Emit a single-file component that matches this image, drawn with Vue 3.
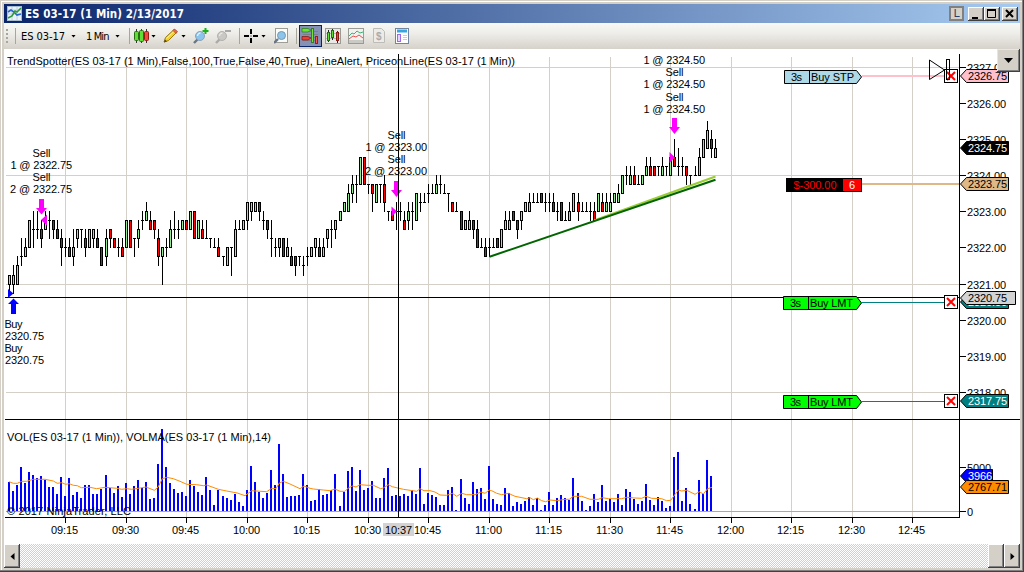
<script setup>
// Horizontal position of a one-minute bar; the 4.03px step adds a pixel now and then.
const STEPS = [24, 53, 82, 112, 141, 170, 200]
const barX = (i) => 9 + 4 * i + STEPS.filter((s) => i >= s).length
// Vertical position in quarter points above 2321.00
const tickY = (q) => Math.floor(284.05 - 9.04 * q)

// colour, body low, body high, low, high
const raw = `g0 1 -1 1,g0 1 -1 2,g0 2 0 3,d3 3 2 5,g3 4 3 5,g4 7 4 7,d6 6 4 8,d6 6 5 8,r5 6 4 7,g6 7 6 8,
d7 7 5 8,r6 7 5 7,r5 6 5 7,r4 5 2 6,d4 4 3 5,r3 4 3 5,g3 4 2 6,g5 6 4 6,d6 6 4 6,r4 5 3 6,
g4 6 4 6,g5 6 4 6,r4 5 4 6,r2 4 2 4,g3 5 2 6,r5 6 4 6,r4 5 4 5,d4 4 3 5,r3 4 3 5,g4 7 4 7,
r4 7 4 7,d5 5 3 5,g5 6 4 7,d7 7 6 8,g7 8 7 9,r6 7 6 8,r6 7 5 7,r3 5 2 6,g3 4 0 4,d4 4 3 5,
g4 6 4 7,d6 6 5 8,d6 6 5 7,g6 7 6 7,r6 7 6 7,g6 8 6 8,r5 8 5 8,g5 7 5 7,r5 6 5 7,d5 5 5 7,
d5 5 4 5,d4 4 4 5,r3 4 3 5,d3 3 2 3,g2 4 2 4,d4 4 1 4,g3 6 3 7,d6 6 6 7,g6 7 6 7,g7 9 6 9,
g8 9 7 9,g8 9 8 9,r8 9 7 9,d7 7 6 8,r6 7 5 7,d5 5 3 7,d4 4 3 5,g4 5 3 5,r3 5 3 5,g3 4 3 5,
r2 3 2 4,r2 3 1 3,d3 3 2 3,d2 2 1 3,d3 3 2 4,g3 4 3 4,g4 5 3 5,r3 4 3 5,g3 4 3 5,g5 6 4 6,
d6 6 4 7,g6 7 5 7,g7 8 7 8,g8 9 8 9,g8 10 8 11,g10 11 9 12,d11 11 9 12,g11 14 11 14,r11 14 11 14,d11 11 10 11,
r10 11 8 11,g9 11 9 11,d11 11 9 11,r9 11 8 12,d8 8 7 8,r7 8 7 8,d8 8 6 9,d8 8 7 9,r6 7 6 8,g7 8 6 9,
d8 8 6 9,g7 10 7 10,d9 9 8 10,d9 9 9 10,d10 10 9 11,d10 10 10 11,g10 11 10 12,d11 11 10 12,d10 10 10 11,d10 10 8 10,
r8 9 8 9,d8 8 8 9,r6 8 6 8,g6 7 6 7,g6 7 6 8,r6 7 5 7,r4 6 4 7,d4 4 4 5,r3 4 3 5,d4 4 3 5,
d4 4 4 5,r4 5 4 5,g4 6 4 6,g6 7 6 8,g6 7 6 8,r7 8 7 8,r6 7 5 7,g7 8 6 8,g8 9 8 9,g8 9 8 10,
d9 9 9 10,d9 9 9 10,r9 10 9 10,d9 9 8 10,d9 9 8 10,r8 9 8 10,d8 8 7 9,r7 9 7 9,d7 7 7 8,g7 8 7 9,
g8 10 8 10,r8 9 7 10,d8 8 8 9,d8 8 8 9,d8 8 7 9,r7 8 7 9,g8 10 8 10,r8 9 8 10,g8 9 8 10,g8 9 8 10,
g9 10 9 10,g9 10 9 11,g10 12 10 12,d12 12 11 13,g11 12 11 13,r11 12 11 13,d11 11 11 12,g11 12 11 12,g12 13 12 14,r12 13 12 14,
r12 13 12 13,d13 13 12 13,g12 13 12 14,d13 13 12 13,g12 14 12 14,r13 14 13 16,d13 13 12 15,d13 13 12 14,r12 13 11 13,d12 12 11 12,
d12 12 12 13,g12 14 12 15,g14 16 14 16,g15 17 15 18,r15 16 14 17,g14 15 14 16`
const candles = raw.split(',').map((s, i) => {
  const t = s.trim()
  const [lo, hi, low, high] = t.slice(1).split(' ').map(Number)
  return { x: barX(i), kind: t[0], top: tickY(hi), bottom: tickY(lo), high: tickY(high), low: tickY(low) }
})

// Volume bar heights in thirds of a pixel below the 273 baseline
const volumes = [
  186, 213, 195, 141, 189, 156, 165, 174, 168, 180, 201, 201, 222, 171, 228, 174, 225, 216, 234, 195,
  195, 222, 222, 206, 165, 204, 219, 198, 231, 189, 222, 198, 180, 204, 186, 237, 234, 132, 27, 141,
  189, 207, 219, 216, 228, 180, 198, 216, 225, 171, 210, 255, 210, 228, 234, 240, 222, 246, 258, 210,
  138, 186, 216, 234, 219, 150, 195, 72, 162, 231, 228, 228, 225, 162, 195, 243, 240, 207, 225, 222,
  210, 162, 258, 216, 153, 141, 213, 150, 210, 204, 183, 234, 234, 174, 144, 228, 225, 228, 222, 228,
  210, 222, 144, 252, 219, 225, 231, 255, 255, 210, 201, 270, 177, 234, 252, 186, 207, 204, 237, 138,
  237, 252, 255, 204, 219, 258, 246, 252, 243, 231, 255, 234, 270, 255, 216, 255, 234, 225, 234, 240,
  174, 219, 243, 270, 258, 222, 246, 195, 243, 237, 246, 222, 255, 207, 216, 237, 252, 243, 192, 240,
  255, 231, 243, 264, 258, 111, 96, 243, 204, 252, 267, 180, 222, 120, 168
].map((v, i) => ({ x: barX(i) - 1, h: Math.round((273 - v) / 3) }))

const average = [
  [0, '27,185 40,190 52,190 65,184 80,184 100,178 135,178 160,183 172,190 185,188 197,193 208,191 220,196 232,197 244,203 270,202 290,206 315,202 350,205 365,208 380,206 395,208 415,205 438,201 463,211 474,202 487,176 500,172 520,176 540,184 560,193 590,194 610,197 620,195 655,208 680,213 712,219 735,227 755,212 800,215 815,205 828,206 838,189 850,184 870,192 900,206 912,198 930,205 940,207 970,210 990,212 1005,207 1020,214 1035,214 1045,204 1057,198 1068,201 1080,194'],
  [360, '24,196 40,196 62,206 70,204 85,194 97,200 130,208 170,214 180,206 192,212 210,212 225,216 240,225 260,226 277,220 290,229 305,220 320,224 345,224 363,216 375,220 388,210 395,212 410,220 425,224 445,220 465,229 500,236 510,233 520,239 532,234 545,242 557,245 570,240 590,242 615,238 628,238 640,229 665,229 690,238 715,238 727,233 745,236 785,236 800,232 825,234 845,235 858,229 875,235 905,236 920,242 932,241 955,210 965,213 980,211 1005,223 1018,215 1030,222 1043,206 1056,202']
].flatMap(([ox, pts]) => pts.split(' ').map((p) => {
  const [x, y] = p.split(',').map(Number)
  return `${(ox + x / 3).toFixed(1)},${(420 + y / 3).toFixed(1)}`
})).join(' ')

const times = ['09:15', '09:30', '09:45', '10:00', '10:15', '10:30', '10:45', '11:00', '11:15', '11:30', '11:45', '12:00', '12:15', '12:30', '12:45']
  .map((t, k) => ({ t, x: barX(14 + 15 * k) }))
const prices = [2327, 2326, 2325, 2324, 2323, 2322, 2321, 2320, 2319, 2318].map((p) => ({ t: p.toFixed(2), y: tickY((p - 2321) * 4) }))

const notes = [
  ['Sell', 32.5, 157, 18], ['1 @ 2322.75', 10.5, 169, 61.5], ['Sell', 32.5, 181, 18], ['2 @ 2322.75', 10, 193, 62],
  ['Sell', 387.5, 139, 18], ['1 @ 2323.00', 365.5, 151, 61.5], ['Sell', 387.5, 163, 18], ['2 @ 2323.00', 365, 175, 62],
  ['1 @ 2324.50', 643.5, 64, 61.5], ['Sell', 665.5, 76, 18], ['1 @ 2324.50', 643.5, 88, 61.5], ['Sell', 665.5, 101, 18], ['1 @ 2324.50', 643.5, 113, 61.5],
  ['Buy', 4.5, 328, 18], ['2320.75', 5, 340, 39], ['Buy', 4.5, 352, 18], ['2320.75', 5, 364, 39]
]
const tags = [
  { t: '2326.75', y: 69, r: 1008, fill: '#ffc0cb', ink: '#000' },
  { t: '2324.75', y: 141, r: 1008, fill: '#000', ink: '#fff' },
  { t: '2323.75', y: 177, r: 1008, fill: '#deb887', ink: '#000' },
  { t: '2320.50', y: 295, r: 1008, fill: '#008080', ink: '#fff' },
  { t: '2320.75', y: 291, r: 1015, fill: '#d3d3d3', ink: '#000' },
  { t: '2317.75', y: 394, r: 1008, fill: '#008080', ink: '#fff' },
  { t: '3966', y: 469, r: 992, fill: '#00f', ink: '#fff' },
  { t: '2767.71', y: 480, r: 1008, fill: '#ff8c00', ink: '#000' }
]
const orders = [
  { t: 'Buy STP', x: 784, y: 70, fill: '#add8e6', box: 69 },
  { t: 'Buy LMT', x: 783, y: 296, fill: '#0f0', box: 295 },
  { t: 'Buy LMT', x: 783, y: 395, fill: '#0f0', box: 394 }
]
</script>

<template>
  <div class="window">
    <header class="titlebar">
      <svg class="app-icon" width="15" height="15" viewBox="0 0 15 15">
        <rect x=".5" y=".5" width="14" height="14" fill="#e8f0f8" stroke="#a8bccf" />
        <path d="M1 4h13M1 8h13M5 1v13M10 1v13" stroke="#c2d0de" fill="none" />
        <path d="M1 6l3-2 3 2 3 3 4-1" stroke="#2868c8" stroke-width="1.6" fill="none" />
        <path d="M1 12l4-2 3-5 2 1 4-4" stroke="#2a9a3a" stroke-width="1.6" fill="none" />
      </svg>
      <svg class="caption" width="165" height="18"><text x="0" y="13" textLength="159" xml:space="preserve">ES 03-17 (1 Min)  2/13/2017</text></svg>
      <div class="link">L</div>
      <div class="winbtn min"><svg width="15" height="13"><rect x="3" y="9" width="6" height="2" /></svg></div>
      <div class="winbtn max"><svg width="15" height="13"><path d="M2.5 2.5h8v7h-8zM2 2.5h9" fill="none" stroke="#000" /><path d="M2 1h9v2H2z" /></svg></div>
      <div class="winbtn close"><svg width="15" height="13"><path d="M3 2l7 7M10 2l-7 7" stroke="#000" stroke-width="2" /></svg></div>
    </header>

    <nav class="toolbar">
      <svg width="3" height="16"><path d="M1 1v15" stroke="#a8a59d" stroke-width="2" stroke-dasharray="2 2" /></svg>
      <i class="sep ml6"></i>
      <svg class="ml5 lbl" width="46" height="16"><text x="0" y="12" textLength="44">ES 03-17</text></svg>
      <i class="caret ml4"></i>
      <svg class="ml10 lbl" width="26" height="16"><text x="0" y="12" textLength="23.5">1 Min</text></svg>
      <i class="caret ml3"></i>
      <i class="sep ml9"></i>
      <svg class="ml4" width="16" height="16">
        <path d="M2.5 1v14M7.5 1v14M12.5 1v14" stroke="#333" />
        <rect x=".5" y="3.5" width="4" height="9" rx="1" fill="#5fdf35" stroke="#2a6e14" />
        <rect x="5.500" y="2.500" width="4" height="11" rx="1" fill="#5fdf35" stroke="#2a6e14" />
        <rect x="10.500" y="3.500" width="4" height="9" rx="1" fill="#f04a3c" stroke="#8f1d16" />
      </svg>
      <i class="caret ml1"></i>
      <svg class="ml7" width="16" height="16">
        <path d="M1 14l1.500-4.500L11 1.500l3 2.500-8.500 8.500z" fill="#f8d020" stroke="#9a7a10" />
        <path d="M3.500 10.500L11.500 3" stroke="#fff19a" />
        <path d="M10 2.500l1.500-1.500 3 2.500-1.500 2z" fill="#e86a50" stroke="#a04030" stroke-width=".7" />
        <path d="M1 14.500l1-3 2 2z" fill="#444" />
      </svg>
      <i class="caret ml2"></i>
      <svg class="ml7" width="16" height="16">
        <path d="M1 15l4-4" stroke="#667686" stroke-width="2.400" />
        <circle cx="7" cy="8" r="4.500" fill="#8cc5ec" stroke="#8aa2b8" /><path d="M4.500 8a3 3 0 0 1 3-3" stroke="#e1f3ff" stroke-width="1.400" fill="none" />
        <path d="M12.500 0v6M9.500 3h6" stroke="#18b01c" stroke-width="2" />
      </svg>
      <svg class="ml6" width="16" height="16">
        <path d="M1 15l4-4" stroke="#aaa" stroke-width="2.400" />
        <circle cx="7" cy="8" r="4.500" fill="#c9c8c4" stroke="#b2b1ad" /><path d="M4.500 8a3 3 0 0 1 3-3" stroke="#e8e7e4" stroke-width="1.400" fill="none" />
        <path d="M10 3h6" stroke="#aaa" stroke-width="2" />
      </svg>
      <i class="sep ml8"></i>
      <svg class="ml4" width="14" height="16"><path d="M7 1v5M7 10v5M0 8h5M9 8h5" stroke="#000" stroke-width="2" /><path d="M6.500 7.500h1v1h-1z" /></svg>
      <i class="caret ml3"></i>
      <svg class="ml8" width="15" height="16">
        <rect x="1.500" y=".5" width="12" height="14" fill="#fbfbfa" stroke="#9d9d98" />
        <path d="M0 15l4-4" stroke="#667686" stroke-width="2.400" /><circle cx="7.500" cy="7.500" r="4" fill="#8cc5ec" stroke="#7895ae" />
      </svg>
      <i class="sep ml7"></i>
      <div class="pressed ml2">
        <svg width="19" height="18">
          <path d="M2 4.500h15M2 7.500h15M2 10.500h15M2 13.500h15" stroke="#7a7f8a" />
          <path d="M1 1.500h6l3 1.500-3 2H1z" fill="#67e52f" stroke="#2a7a14" stroke-width=".7" />
          <path d="M1 9.500h6l3 1.500-3 2H1z" fill="#ef3e32" stroke="#7d1610" stroke-width=".7" />
          <path d="M11.500 1v15" stroke="#357b1f" stroke-width="3" /><path d="M11.500 2v13" stroke="#70e43c" />
          <path d="M15.500 9v8" stroke="#991e18" stroke-width="3" /><path d="M15.500 10v6" stroke="#f25a4d" />
        </svg>
      </div>
      <svg class="ml3" width="16" height="16">
        <rect x=".5" y=".5" width="15" height="15" fill="#e8e8e6" stroke="#9a9a96" /><path d="M1 5.500h14M1 10.500h14" stroke="#b9b9b5" />
        <path d="M3.500 2v12M7.500 1v11M12.500 3v12" stroke="#222" />
        <rect x="2.500" y="4.500" width="2" height="8" fill="#5fdf35" stroke="#286d15" />
        <rect x="6.500" y="2.500" width="2" height="7" fill="#5fdf35" stroke="#286d15" />
        <rect x="11.500" y="4.500" width="2" height="8" fill="#ef3e32" stroke="#861b14" />
      </svg>
      <svg class="ml7" width="16" height="16">
        <rect x=".5" y=".5" width="15" height="15" fill="#f1f1ef" stroke="#9a9a96" /><path d="M1 12h14v3H1z" fill="#c9c9c5" />
        <path d="M1 8l3-3 2 1 3-3 3 2 3-1" stroke="#35b676" fill="none" />
        <path d="M1 11l4-3 3 1 3-2 4 3" stroke="#e1554d" fill="none" />
      </svg>
      <svg class="ml9" width="12" height="16">
        <path d="M.5.5h8l3 3v11H.5z" fill="#ecebe8" stroke="#bdbcb8" /><text x="3" y="12" class="dollar">$</text>
      </svg>
      <svg class="ml10" width="14" height="16">
        <rect x=".5" y=".5" width="13" height="15" fill="#fff" stroke="#7184a0" /><path d="M2 3h10" stroke="#36a4e0" stroke-width="3" />
        <rect x="2.500" y="6.500" width="3" height="7" fill="#e6d6ff" stroke="#9a6ae8" /><path d="M8 7.500h4M8 9.500h4M8 11.500h4" stroke="#c8ced8" />
      </svg>
    </nav>

    <main class="chart">
      <svg width="1016" height="495" viewBox="4 49 1016 495">
        <g shape-rendering="crispEdges">
          <g fill="#d4d0c8">
            <rect v-for="t in times" :key="t.t" :x="t.x" y="57" width="1" height="460" />
            <rect v-for="y in [67, 175, 284, 392]" :key="y" x="6" :y="y" width="953" height="1" />
          </g>
          <rect x="6" y="511" width="953" height="1" fill="#a9a9a9" />
          <rect v-for="(v, i) in volumes" :key="i" :x="v.x" :y="511 - v.h" width="2" :height="v.h" fill="#00f" />
          <g v-for="(c, i) in candles" :key="i">
            <rect :x="c.x" :y="c.high" width="1" :height="c.low - c.high + 1" />
            <rect v-if="c.kind === 'd'" :x="c.x - 1" :y="c.top" width="3" height="1" />
            <template v-else>
              <rect :x="c.x - 1" :y="c.top" width="3" :height="c.bottom - c.top + 1" />
              <rect :x="c.x" :y="c.top + 1" width="1" :height="c.bottom - c.top - 1" :fill="c.kind === 'g' ? '#90ee90' : '#f00'" />
            </template>
          </g>
        </g>
        <polyline :points="average" fill="none" stroke="#ff8c00" stroke-width="1" />
        <path d="M594 220.500L715.500 176.500" stroke="#9acd32" stroke-width="2" />
        <path d="M489.500 256.800L715.500 179.800" stroke="#006400" stroke-width="2" />

        <g fill="#f0f">
          <path d="M39 199h5v9h3l-5.500 6.500-5.500-6.500h3z" /><path d="M41 220l6-5.500v11z" />
          <path d="M394 181h5v9h3l-5.500 7-5.500-7h3z" /><path d="M397 211.500l-5.500-5v10z" />
          <path d="M672 118h5v9h3l-5.500 7-5.500-7h3z" /><path d="M675 157.500l-5.500-5.500v11z" />
        </g>
        <g fill="#00f"><path d="M13.500 298.500l5.500 5.500h-3v10h-5v-10h-3z" /><path d="M8 289v9l5.500-4.500z" /></g>

        <g class="t">
          <text v-for="(n, i) in notes" :key="i" :x="n[1]" :y="n[2]" :textLength="n[3]">{{ n[0] }}</text>
          <text x="7" y="65" textLength="508">TrendSpotter(ES 03-17 (1 Min),False,100,True,False,40,True), LineAlert, PriceonLine(ES 03-17 (1 Min))</text>
          <text x="7" y="441" textLength="264">VOL(ES 03-17 (1 Min)), VOLMA(ES 03-17 (1 Min),14)</text>
          <text x="7" y="515" textLength="124">© 2017 NinjaTrader, LLC</text>
        </g>

        <g shape-rendering="crispEdges">
          <rect x="862" y="75" width="83" height="2" fill="#ffc0cb" />
          <rect x="862" y="183" width="98" height="2" fill="#deb887" />
          <rect x="862" y="302" width="83" height="1" fill="#008080" />
          <rect x="862" y="401" width="83" height="1" fill="#008080" />
          <rect x="959" y="54" width="1" height="464" />
          <rect x="5" y="517" width="955" height="1" />
          <rect x="5" y="419" width="1015" height="1" />
          <rect x="5" y="297" width="955" height="1" />
          <rect x="398" y="54" width="1" height="464" />
          <rect v-for="p in prices" :key="p.t" x="960" :y="p.y" width="6" height="1" />
          <rect x="960" y="467" width="6" height="1" /><rect x="960" y="511" width="6" height="1" />
          <rect v-for="t in times" :key="t.t" :x="t.x" y="518" width="1" height="5" />
        </g>
        <g class="t">
          <text v-for="p in prices" :key="p.t" x="967" :y="p.y + 5" textLength="39">{{ p.t }}</text>
          <text x="967" y="472" textLength="24">5000</text><text x="967" y="516">0</text>
          <text v-for="t in times" :key="t.t" :x="t.x - 14" y="534" textLength="27">{{ t.t }}</text>
          <rect x="383" y="523" width="31" height="13" fill="#d3d3d3" />
          <text x="385" y="534" textLength="27">10:37</text>
        </g>

        <g v-for="o in orders" :key="o.y" class="t">
          <path :d="`M${o.x + .5} ${o.y + .5}H856.5L861.5 ${o.y + 7}L856.5 ${o.y + 13.5}H${o.x + .5}Z`" :fill="o.fill" stroke="#000" />
          <rect :x="o.x + 25" :y="o.y" width="1" height="14" />
          <text :x="o.x + 7" :y="o.y + 11" textLength="11">3s</text>
          <text :x="o.x + 27" :y="o.y + 11" textLength="43">{{ o.t }}</text>
          <rect x="944.500" :y="o.box + .5" width="13" height="13" fill="#fff" stroke="#000" />
          <path :d="`M947 ${o.box + 3}l8 8M955 ${o.box + 3}l-8 8`" stroke="#f00" stroke-width="2" />
        </g>
        <g class="t">
          <rect x="786" y="178" width="76" height="14" /><rect x="843" y="179" width="18" height="12" fill="#f00" />
          <text x="793.500" y="189" textLength="43" fill="#f00">$-300.00</text><text x="849" y="189" fill="#fff">6</text>
        </g>
        <path d="M929.500 60v19.500L944.500 70z" fill="none" stroke="#000" />
        <rect x="946.500" y="59.500" width="3" height="20" fill="none" stroke="#000" />

        <g v-for="g in tags" :key="g.t + g.y" class="t">
          <path :d="`M960.5 ${g.y + 7}L966.500 ${g.y + .5}H${g.r + .5}V${g.y + 13.5}H966.500Z`" :fill="g.fill" stroke="#000" />
          <text x="968" :y="g.y + 11" :textLength="g.t.length > 4 ? 39 : 24" :fill="g.ink">{{ g.t }}</text>
        </g>
      </svg>
      <button class="dropdown"><i class="caret big"></i></button>
    </main>

    <footer class="scroll">
      <div class="sbtn"><svg width="5" height="7"><path d="M4.500 0v7L.5 3.500z" /></svg></div>
      <div class="track"></div>
      <div class="sbtn thumb"></div>
      <div class="sbtn"><svg width="5" height="7"><path d="M.5 0v7l4-3.500z" /></svg></div>
    </footer>
  </div>
</template>

<style>
html, body { margin: 0; overflow: hidden; background: #d4d0c8; }
</style>
<style scoped>
.window {
  box-sizing: border-box; width: 1024px; height: 572px; padding: 4px 4px 4px 4px; background: #d4d0c8;
  box-shadow: inset -1px -1px #404040, inset -2px -2px #808080, inset 1px 1px #d4d0c8, inset 2px 2px #fff;
  display: flex; flex-direction: column; overflow: hidden;
}
.titlebar {
  height: 19px; flex: none; display: flex; align-items: center; padding: 0 2px 0 3px; box-sizing: border-box;
  background: linear-gradient(90deg, #0a246a, #a6caf0);
}
.caption { margin-left: 3px; margin-right: auto; }
.caption text { font: bold 11.500px "DejaVu Sans Condensed", "DejaVu Sans", sans-serif; fill: #fff; }
.link {
  width: 15px; height: 15px; box-sizing: border-box; border: 2px solid #808080; background: #d4d0c8; color: #27406e;
  font: 11px/11px "DejaVu Sans", sans-serif; text-align: center; margin-right: 4px;
}
.winbtn {
  width: 16px; height: 14px; box-sizing: border-box; background: #d4d0c8; padding: 1px;
  box-shadow: inset -1px -1px #404040, inset 1px 1px #fff, inset -2px -2px #808080;
}
.winbtn svg { display: block; }
.close { margin-left: 2px; }
.toolbar {
  height: 26px; flex: none; box-sizing: border-box; display: flex; align-items: center; padding-left: 2px;
  background: linear-gradient(#f8f8f6, #eeede9 40%, #d6d2ca); border-radius: 0 0 3px 3px;
}
.toolbar > * { flex: none; }
.lbl text { font: 11px "DejaVu Sans Condensed", "DejaVu Sans", sans-serif; fill: #000; }
.dollar { font: bold 10px "Liberation Sans", sans-serif; fill: #aaa; }
.sep { width: 1px; height: 16px; background: #a8a59d; }
.caret { width: 5px; height: 3px; background: #000; clip-path: polygon(0 0, 100% 0, 50% 100%); }
.caret.big { display: block; width: 9px; height: 5px; margin: auto; }
.pressed {
  width: 23px; height: 22px; box-sizing: border-box; border: 1px solid #0a246a; background: #8592b5; padding: 1px;
}
.pressed svg { display: block; }
.ml1 { margin-left: 1px; } .ml2 { margin-left: 2px; } .ml3 { margin-left: 3px; } .ml4 { margin-left: 4px; }
.ml5 { margin-left: 5px; } .ml6 { margin-left: 6px; } .ml7 { margin-left: 7px; } .ml8 { margin-left: 8px; }
.ml9 { margin-left: 9px; } .ml10 { margin-left: 10px; }
.chart { position: relative; height: 495px; flex: none; background: #fff; }
.chart svg { display: block; }
.t { font: 11px "Liberation Sans", Arial, sans-serif; }
.dropdown {
  position: absolute; top: 0; right: 0; width: 23px; height: 23px; padding: 0; border: 0; background: #d4d0c8;
  box-shadow: inset -1px -1px #404040, inset 1px 1px #e8e6e0, inset -2px -2px #808080;
}
.scroll { height: 24px; flex: none; display: flex; }
.track { flex: 1; background: repeating-conic-gradient(#d4d0c8 0 25%, #fff 0 50%) 0 0 / 2px 2px; }
.sbtn {
  width: 16px; background: #d4d0c8; display: flex; align-items: center; justify-content: center;
  box-shadow: inset -1px -1px #404040, inset 1px 1px #fff, inset -2px -2px #808080;
}
</style>
